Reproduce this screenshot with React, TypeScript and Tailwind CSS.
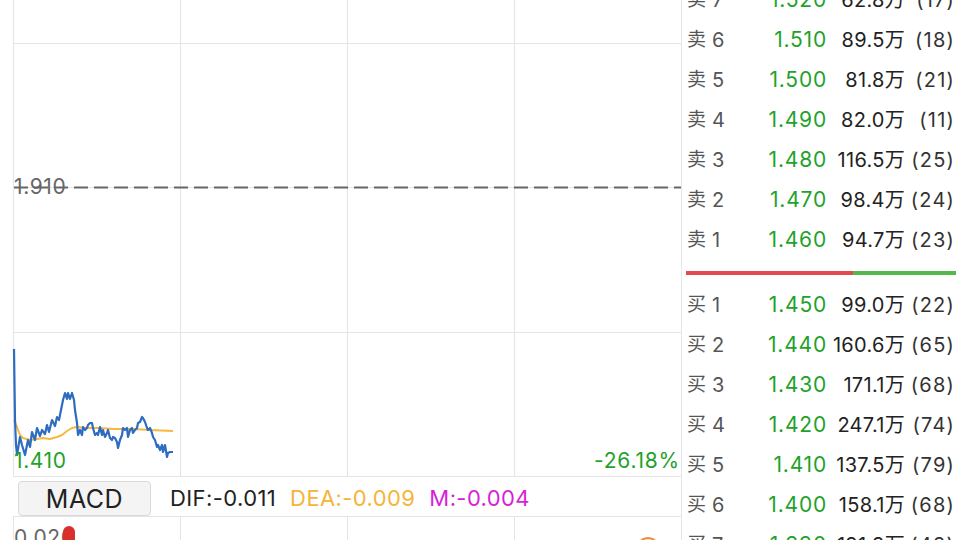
import React from 'react';

const FONT = "font-['Inter','Noto_Sans_CJK_SC',sans-serif]";

// minute line: price and average
const PRICE_PTS: [number, number][] = [
  [14, 349], [15, 420], [16, 445], [17, 455], [20, 437], [22, 445], [25, 455], [28, 440], [30, 447],
  [32, 432], [35, 440], [37, 428], [40, 436], [42, 430], [45, 434], [47, 425], [49, 432], [52, 420],
  [55, 426], [57, 417], [59, 420], [61, 410], [63, 400], [65, 393], [67, 399], [68, 393], [70, 399],
  [72, 393], [74, 400], [75, 410], [77, 423], [78, 435], [80, 430], [82, 435], [83, 427], [85, 430],
  [87, 428], [88, 425], [90, 423], [92, 423], [93, 428], [95, 435], [97, 433], [98, 435], [100, 427],
  [102, 435], [103, 430], [105, 437], [107, 433], [108, 430], [110, 438], [112, 440], [113, 437],
  [115, 438], [117, 442], [118, 448], [120, 440], [122, 435], [123, 428], [125, 430], [127, 428],
  [128, 437], [130, 430], [132, 428], [133, 433], [135, 430], [137, 428], [138, 423], [140, 422],
  [142, 417], [143, 418], [145, 422], [147, 428], [148, 430], [150, 428], [152, 433], [153, 437],
  [155, 440], [157, 447], [158, 445], [160, 450], [162, 445], [163, 452], [165, 445], [167, 457],
  [168, 453], [170, 452], [173, 452],
];

const AVG_PTS: [number, number][] = [
  [14, 420], [17, 427], [20, 435], [23, 438], [30, 440], [37, 439], [43, 438], [50, 439], [57, 437],
  [62, 435], [67, 431], [72, 428], [77, 427], [87, 428], [100, 428], [113, 429], [133, 429],
  [150, 430], [173, 431],
];

const toPoints = (pts: [number, number][]) => pts.map(([x, y]) => `${x},${y}`).join(' ');

const asks = [
  { n: 7, price: '1.520', vol: '62.8万', count: '(17)' },
  { n: 6, price: '1.510', vol: '89.5万', count: '(18)' },
  { n: 5, price: '1.500', vol: '81.8万', count: '(21)' },
  { n: 4, price: '1.490', vol: '82.0万', count: '(11)' },
  { n: 3, price: '1.480', vol: '116.5万', count: '(25)' },
  { n: 2, price: '1.470', vol: '98.4万', count: '(24)' },
  { n: 1, price: '1.460', vol: '94.7万', count: '(23)' },
];

const bids = [
  { n: 1, price: '1.450', vol: '99.0万', count: '(22)' },
  { n: 2, price: '1.440', vol: '160.6万', count: '(65)' },
  { n: 3, price: '1.430', vol: '171.1万', count: '(68)' },
  { n: 4, price: '1.420', vol: '247.1万', count: '(74)' },
  { n: 5, price: '1.410', vol: '137.5万', count: '(79)' },
  { n: 6, price: '1.400', vol: '158.1万', count: '(68)' },
  { n: 7, price: '1.390', vol: '191.3万', count: '(43)' },
];

const PriceChart = () => (
  <div className="relative h-[477px] overflow-hidden">
    <svg className="absolute inset-0" width={681} height={477} viewBox="0 0 681 477">
      <g stroke="#e4e5e8" strokeWidth={1.2}>
        <line x1={13.5} y1={0} x2={13.5} y2={477} />
        <line x1={180.5} y1={0} x2={180.5} y2={477} />
        <line x1={347.5} y1={0} x2={347.5} y2={477} />
        <line x1={514.5} y1={0} x2={514.5} y2={477} />
        <line x1={13} y1={43.5} x2={681} y2={43.5} />
        <line x1={13} y1={187.5} x2={681} y2={187.5} />
        <line x1={13} y1={332.5} x2={681} y2={332.5} />
        <line x1={13} y1={476.5} x2={681} y2={476.5} />
      </g>
      <polyline points={toPoints(AVG_PTS)} fill="none" stroke="#f6b93f" strokeWidth={2} strokeLinejoin="round" />
      <polyline points={toPoints(PRICE_PTS)} fill="none" stroke="#2d6cc0" strokeWidth={2.2} strokeLinejoin="round" />
    </svg>
    <span className="absolute left-[14px] top-[174px] text-[21px] tracking-[0.6px] leading-[26px] text-[#666]">1.910</span>
    <svg className="absolute left-0 top-[186px]" width={681} height={3} viewBox="0 0 681 3">
      <line x1={14} y1={1.5} x2={681} y2={1.5} stroke="#666" strokeWidth={2} strokeDasharray="14 6" />
    </svg>
    <span className="absolute left-[14px] top-[448px] text-[21px] tracking-[0.6px] leading-[26px] text-[#1fa22b]">1.410</span>
    <span className="absolute right-[1px] top-[448px] text-[21px] tracking-[0.8px] leading-[26px] text-[#1fa22b]">-26.18%</span>
  </div>
);

const MacdBar = () => (
  <div className="flex items-center h-10 border-b border-[#e4e5e8] ml-[13px]">
    <div className="ml-[5px] mt-[4px] w-[133px] h-[35px] pt-[2px] rounded-[4px] border border-[#d9d9d9] bg-[#f4f4f4] flex items-center justify-center text-[25px] tracking-[0.5px] text-[#222]">
      MACD
    </div>
    <div className="ml-[19px] mt-[4px] flex items-center gap-[14px] text-[22px] tracking-[0.4px]">
      <span className="text-[#222]">DIF:-0.011</span>
      <span className="text-[#f5b43a]">DEA:-0.009</span>
      <span className="text-[#d81fd8]">M:-0.004</span>
    </div>
  </div>
);

const MacdChart = () => (
  <div className="relative flex-1 ml-[13px] grid grid-cols-4 overflow-hidden">
    <div className="border-l border-[#e4e5e8]" />
    <div className="border-l border-[#e4e5e8]" />
    <div className="border-l border-[#e4e5e8]" />
    <div className="border-l border-[#e4e5e8]" />
    <span className="absolute left-[1px] top-[8px] text-[21px] tracking-[0.6px] leading-[26px] text-[#666]">0.020</span>
    <div className="absolute left-[50px] top-[9px] w-[12px] h-[20px] rounded-t-full bg-[#d9302c]" />
    <div className="absolute left-[623px] top-[20px] w-[24px] h-[24px] rounded-full border-2 border-[#ef8a3c] bg-[#fde6d2]" />
  </div>
);

type Level = { n: number; price: string; vol: string; count: string };

const Row = ({ side, level }: { side: string; level: Level }) => (
  <div className="flex items-center h-10 pl-[5px]">
    <div className="w-[60px] flex items-center text-[19px] text-[#555]">
      <span>{side}</span>
      <span className="ml-[6px] text-[20px]">{level.n}</span>
    </div>
    <div className="w-[80px] text-right text-[21px] tracking-[0.8px] text-[#1fa22b]">{level.price}</div>
    <div className="w-[78px] text-right text-[20px] tracking-[0.3px] text-[#222]">{level.vol}</div>
    <div className="w-[50px] text-right text-[20px] tracking-[1.2px] text-[#333]">{level.count}</div>
  </div>
);

const OrderBook = () => (
  <div className="flex-1 border-l border-[#e4e5e8] overflow-hidden">
    <div className="-mt-5">
      {asks.map(l => <Row key={`a${l.n}`} side="卖" level={l} />)}
      <div className="h-[25px] flex items-center px-[4px]">
        <div className="flex w-full h-[4px]">
          <div className="w-[62%] bg-[#e24a4d]" />
          <div className="flex-1 bg-[#55b84a]" />
        </div>
      </div>
      {bids.map(l => <Row key={`b${l.n}`} side="买" level={l} />)}
    </div>
  </div>
);

export default function App() {
  return (
    <div className={`w-[960px] h-[540px] overflow-hidden bg-white flex ${FONT}`}>
      <div className="w-[681px] flex flex-col">
        <PriceChart />
        <MacdBar />
        <MacdChart />
      </div>
      <OrderBook />
    </div>
  );
}
